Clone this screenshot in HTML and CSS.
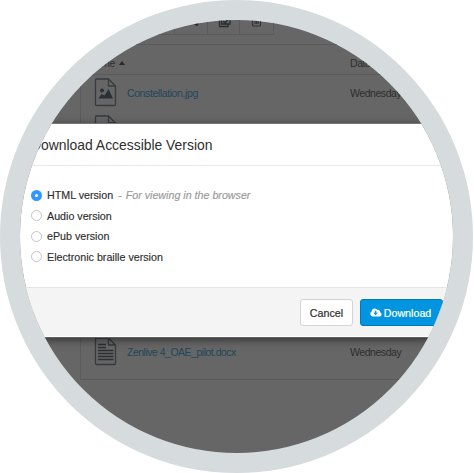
FILE: index.html
```html
<!DOCTYPE html>
<html lang="en">
<head>
<meta charset="utf-8">
<title>Download Accessible Version</title>
<link rel="stylesheet" href="styles.css">
</head>
<body>
<div class="lens">
  <div class="library">
    <div class="toolbar">
      <span class="tool"><svg width="32" height="14" viewBox="0 0 32 14"><path d="M17 1l6 4" stroke="#252a2c" stroke-width="3"/></svg></span>
      <span class="tool"><svg width="31" height="14" viewBox="0 0 31 14"><path d="M13.500-3h8.500v7h-8.500zM11.500-1v7.500h8.500v-2" fill="none" stroke="#292e30" stroke-width="1.300"/><path d="M15 1l2 2 4-5" fill="none" stroke="#292e30" stroke-width="1.600"/></svg></span>
      <span class="tool"><svg width="33" height="14" viewBox="0 0 33 14"><path d="M12.500-3v8q0 1 1 1h6q1 0 1-1v-8M15-2v6M16.600-2v6M18.200-2v6" fill="none" stroke="#303435" stroke-width="1.100"/></svg></span>
    </div>
    <div class="files">
      <div class="row head"><span class="name-head">Name <i class="caret"></i></span><span class="date">Date</span></div>
      <div class="row">
        <svg class="file-icon" width="23" height="29" viewBox="0 0 23 29"><path d="M1.500 1h13l7 7v18.500q0 1-1 1h-18q-1 0-1-1V2q0-1 1-1M14.500 1v7h7" fill="none" stroke="#353b3e" stroke-width="1.300"/><circle cx="8" cy="12.500" r="2" fill="#2a3033"/><path d="M4.500 20.500l3-4.500 3 1.500 4-6.500 4.500 9.500z" fill="#2a3033"/></svg>
        <span class="link">Constellation.jpg</span><span class="date">Wednesday</span>
      </div>
      <div class="row">
        <svg class="file-icon" width="23" height="29" viewBox="0 0 23 29"><path d="M1.500 1h13l7 7v18.500q0 1-1 1h-18q-1 0-1-1V2q0-1 1-1M14.500 1v7h7" fill="none" stroke="#353b3e" stroke-width="1.300"/></svg>
      </div>
      <div class="row last">
        <svg class="file-icon" width="23" height="29" viewBox="0 0 23 29"><path d="M1.500 1h13l7 7v18.500q0 1-1 1h-18q-1 0-1-1V2q0-1 1-1M14.500 1v7h7" fill="none" stroke="#353b3e" stroke-width="1.300"/><path d="M4 7.500h8M4 10.500h8M4 13.500h15.500M4 16.500h15.500M4 19.500h15.500M4 22.500h15.500" stroke="#2a3033" stroke-width="1.700"/></svg>
        <span class="link docx">Zenlive 4_OAE_pilot.docx</span><span class="date">Wednesday</span>
      </div>
    </div>
  </div>
  <div class="modal">
    <div class="modal-head">Download Accessible Version</div>
    <div class="modal-body">
      <div class="option"><i class="radio checked"></i><span>HTML version</span><span class="dash">-</span><em>For viewing in the browser</em></div>
      <div class="option"><i class="radio"></i><span>Audio version</span></div>
      <div class="option"><i class="radio"></i><span>ePub version</span></div>
      <div class="option"><i class="radio"></i><span>Electronic braille version</span></div>
    </div>
    <div class="modal-foot">
      <span class="button">Cancel</span>
      <span class="button primary"><svg width="12" height="9" viewBox="0 0 12 9"><path fill="#fff" d="M2.800 8.500A2.700 2.700 0 0 1 1.600 3.500 3.200 3.200 0 0 1 7.500 2 1.900 1.900 0 0 1 10 4.200 2.200 2.200 0 0 1 9.300 8.500z"/><path fill="#0094e1" d="M4.800 2.800h1.600v2h1.500L5.600 7.300 3.300 4.800h1.500z"/></svg>Download</span>
    </div>
  </div>
</div>
</body>
</html>
```

FILE: styles.css
```css
* { box-sizing: border-box; }
html, body { margin: 0; overflow: hidden; background: #fff; }
body { font: 10.7px/14px "Liberation Sans", Arial, sans-serif; color: #2e2e2e; white-space: nowrap; }
.lens {
  position: relative;
  width: 473px;
  height: 473px;
  border: 20px solid #d6dbde;
  border-radius: 50%;
  overflow: hidden;
  background: #666;
}
.library { width: 480px; padding-left: 60px; font-size: 10.5px; }
.toolbar { display: flex; width: 194px; height: 15px; justify-content: flex-end; border: solid #5a5a5a; border-width: 0 1px 1px 0; }
.tool { display: flex; border-left: 1px solid #5a5a5a; }
.tool svg { display: block; }
.files { height: 336px; margin-top: 9px; display: flex; flex-direction: column; border: 1px solid #5b5b5b; }
.row { display: flex; flex: none; align-items: center; height: 37px; padding: 0 0 2px 13px; }
.row.head { height: 30px; padding: 7px 0 0 7px; border-bottom: 1px solid #5b5b5b; }
.row.last { margin-top: auto; margin-bottom: 8px; }
.name-head { width: 262px; letter-spacing: -.2px; }
.caret { display: inline-block; margin-left: 1px; border: solid transparent; border-width: 0 3.500px 4px; border-bottom-color: #292929; vertical-align: 2px; }
.file-icon { flex: none; margin-right: 10px; }
.link { width: 223px; color: #23475a; letter-spacing: -.4px; }
.link.docx { letter-spacing: -.5px; }
.date { letter-spacing: -.45px; }
.modal {
  position: absolute;
  top: 103px;
  left: -8px;
  width: 460px;
  height: 215px;
  display: flex;
  flex-direction: column;
  border: 1px solid #777;
  border-bottom-color: #626262;
  background: #fff;
  box-shadow: 0 2px 8px rgba(0, 0, 0, .5);
}
.modal-head { height: 42px; padding: 14px 0 0 18px; border-bottom: 1px solid #e8e8e8; font-size: 13.9px; }
.modal-body { height: 121px; display: flex; flex-direction: column; gap: 6.600px; padding: 22px 0 0 18px; -webkit-text-stroke: .15px; }
.option { display: flex; align-items: center; height: 14px; }
.radio { width: 11px; height: 11px; margin-right: 5px; border: 1px solid #c4c4c4; border-radius: 50%; background: #fff; }
.radio.checked { border: 4px solid #3097ff; }
.dash { margin: 0 4px 0 5px; color: #999; }
em { color: #999; }
.modal-foot { flex: 1; display: flex; gap: 7px; padding: 11px 0 0 287px; border-top: 1px solid #e5e5e5; border-bottom: 1px solid #fff; background: #f4f4f4; -webkit-text-stroke: .2px; }
.button { display: flex; align-items: center; justify-content: center; width: 53px; height: 27px; border: 1px solid #d4d4d4; border-radius: 3px; background: #fff; }
.button.primary { width: 83px; gap: 2px; padding-right: 2px; border-color: #0079ba; background: #0094e1; color: #fff; }
```
